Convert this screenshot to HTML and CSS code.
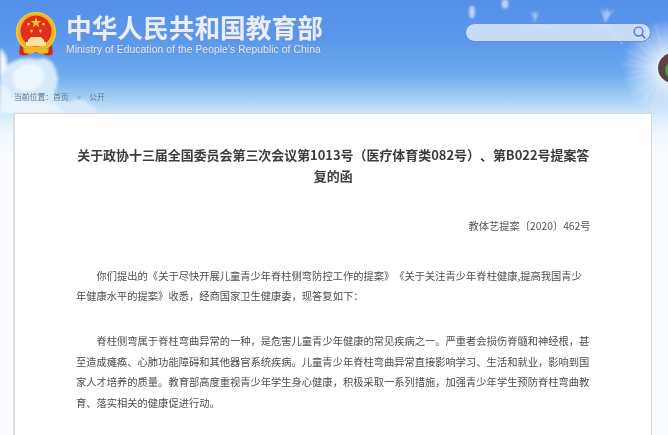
FILE: index.html
```html
<!DOCTYPE html>
<html lang="zh">
<head>
<meta charset="utf-8">
<title>关于政协十三届全国委员会第三次会议第1013号提案答复的函</title>
<link rel="stylesheet" href="styles.css">
</head>
<body>
<div class="page">
  <svg class="scenery" width="668" height="135" viewBox="0 0 668 135" aria-hidden="true">
    <defs>
      <filter id="soft"><feGaussianBlur stdDeviation="1.800"/></filter>
      <filter id="soft2"><feGaussianBlur stdDeviation=".8"/></filter>
      <radialGradient id="puff"><stop offset="0.3" stop-color="#fff" stop-opacity=".75"/><stop offset="1" stop-color="#fff" stop-opacity="0"/></radialGradient>
    </defs>
    <g filter="url(#soft)">
      <path d="M0 48l4 4 3 6 0 7 5-3 8-3 9-1 8 1 8-1 7 4 4 8 2 9-1 8-3 5 6 7 9 3 8-3 8 2 9 6 7 8H0z" fill="#d6e9fa"/>
      <path d="M0 52l5 8 1 10-6 5z" fill="#f6fafe"/>
      <path d="M12 74l10-9 14-1 7 6 1 9-5 8-12 5-12-4z" fill="#eef6fd"/>
      <path d="M0 84l8 6 6 10 12 2 22 0 10 4 8 7H0z" fill="#eaf4fc"/>
    </g>
    <g filter="url(#soft2)" fill="#fff" opacity=".6">
      <ellipse cx="472" cy="12" rx="3" ry="6.500"/>
      <ellipse cx="505" cy="4" rx="3.500" ry="4.500"/>
      <path d="M535 22l-4-11 3 3 1-4 1 4 3-3z" opacity=".75"/>
      <path d="M605 23l-4-15 4 5 2-6 2 6 5-4z" opacity=".75"/>
      <path d="M535 22l-9 7M605 23l-12 8" stroke="#fff" stroke-width="1" fill="none" opacity=".6"/>
    </g>
    <path d="M537 23l20 7M606 24l16 20" stroke="#efe7cf" stroke-width=".8" fill="none" opacity=".7"/>
    <circle cx="672" cy="68" r="50" fill="url(#puff)"/>
    <g stroke="#fff" stroke-width=".5" opacity=".65" filter="url(#soft2)">
      <path d="M668 70L625 50M668 70L622 64M668 70L626 80M668 70L632 95M668 70L640 32M668 70L655 24M668 70L650 110M668 70L630 72M668 70L636 42M668 70L628 60M668 70L642 102"/>
    </g>
    <circle cx="673" cy="68" r="15" fill="#5a4345"/>
    <circle cx="674" cy="70" r="9" fill="#5d9344"/>
  </svg>

  <header class="masthead">
    <svg class="emblem" width="42" height="46" viewBox="0 0 42 46" role="img" aria-label="国徽">
      <path d="M6 31c-2 4-2 9-1 12 5 1 8 0 11-2h10c3 2 6 3 11 2 1-3 1-8-1-12z" fill="#d42a1d"/>
      <circle cx="21" cy="20" r="20" fill="#eeb81f"/>
      <circle cx="21" cy="20" r="19.500" fill="none" stroke="#f4cf57" stroke-width="1"/>
      <circle cx="21" cy="19" r="15.500" fill="#e12c20"/>
      <polygon points="21,5 22.300,9 26.400,9 23.100,11.400 24.300,15.300 21,12.900 17.700,15.300 18.900,11.400 15.600,9 19.700,9" fill="#f5c52b"/>
      <circle cx="13.500" cy="12" r="1.500" fill="#f5c52b"/>
      <circle cx="28.500" cy="12" r="1.500" fill="#f5c52b"/>
      <circle cx="16.500" cy="19" r="1.400" fill="#f5c52b"/>
      <circle cx="25.500" cy="19" r="1.400" fill="#f5c52b"/>
      <path d="M13 28l3-3h10l3 3v1.500l2 .5v4H11v-4l2-.5z" fill="#f8e4a0"/>
      <path d="M8 36c4 3 9 3 13 1 4 2 9 2 13-1l-1 5c-3 1-9 1-12-1-3 2-9 2-12 1z" fill="#efbb28"/>
    </svg>
    <div class="brand">
      <h1 class="brand-cn">中华人民共和国教育部</h1>
      <p class="brand-en">Ministry of Education of the People's Republic of China</p>
    </div>
    <form class="search">
      <svg class="search-icon" width="13" height="13" viewBox="0 0 14 14" aria-hidden="true">
        <circle cx="6" cy="6" r="4.800" fill="none" stroke="#5272e4" stroke-width="1.500"/>
        <path d="M9.500 9.500l3.200 3.200" stroke="#5272e4" stroke-width="1.800" stroke-linecap="round"/>
      </svg>
    </form>
  </header>

  <nav class="crumbs">当前位置&#xFF1A;首页<span class="crumb-sep">&gt;</span>公开</nav>

  <main class="sheet">
    <h2 class="doc-title">关于政协十三届全国委员会第三次会议第1013号&#xFF08;医疗体育类082号&#xFF09;、第B022号提案答复的函</h2>
    <p class="doc-no">教体艺提案〔2020〕462号</p>
    <p class="para">你们提出的《关于尽快开展儿童青少年脊柱侧弯防控工作的提案》《关于关注青少年脊柱健康,提高我国青少年健康水平的提案》收悉&#xFF0C;经商国家卫生健康委&#xFF0C;现答复如下&#xFF1A;</p>
    <p class="para">脊柱侧弯属于脊柱弯曲异常的一种&#xFF0C;是危害儿童青少年健康的常见疾病之一。严重者会损伤脊髓和神经根&#xFF0C;甚至造成瘫痪、心肺功能障碍和其他器官系统疾病。儿童青少年脊柱弯曲异常直接影响学习、生活和就业&#xFF0C;影响到国家人才培养的质量。教育部高度重视青少年学生身心健康&#xFF0C;积极采取一系列措施&#xFF0C;加强青少年学生预防脊柱弯曲教育、落实相关的健康促进行动。</p>
  </main>
</div>
</body>
</html>
```
FILE: styles.css
```css
* { box-sizing: border-box; }
html, body { margin: 0; height: 100%; overflow: hidden; }
body { font-family: "Liberation Sans", "Noto Sans CJK SC", sans-serif; text-spacing-trim: space-all; }

.page {
  position: relative;
  width: 668px;
  height: 435px;
  overflow: hidden;
  background: linear-gradient(#5590ea 0, #5b98ec 40px, #6cabef 75px, #a9d2f6 100px, #dcedfb 118px, #f2f8fd 135px, #fbfcfe 160px);
}
.scenery { position: absolute; left: 0; top: 0; }

.masthead {
  position: relative;
  height: 88px;
  display: flex;
  align-items: flex-start;
  padding: 12px 17px 0 15px;
}
.emblem { flex: none; filter: blur(.4px); }
.brand { margin: 3px 0 0 9px; filter: blur(.35px); }
.brand-cn {
  margin: 0;
  font: bold 25.700px/24px "Noto Sans CJK SC", sans-serif;
  white-space: nowrap;
  color: #e8eef9;
  text-shadow: 0 1px 1px #7f93b8;
}
.brand-en {
  margin: 4px 0 0;
  font-size: 10.300px;
  line-height: 13px;
  letter-spacing: .08px;
  white-space: nowrap;
  color: #dfe8f6;
  text-shadow: 0 1px 1px #6d86b3;
}
.search {
  margin: 10.500px 0 0 auto;
  width: 186px;
  height: 19px;
  display: flex;
  align-items: center;
  justify-content: flex-end;
  padding-right: 4px;
  border: 1px solid #6d86e2;
  border-radius: 10px;
  background: rgba(224, 236, 252, .82);
}

.crumbs {
  position: relative;
  height: 25px;
  padding: 2px 0 0 14px;
  font: 7.800px/14px "Noto Sans CJK SC", sans-serif;
  color: #6b7480;
  filter: blur(.3px);
}
.crumb-sep { margin: 0 8px; font-family: "Liberation Sans", sans-serif; color: #7d8791; }

.sheet {
  position: relative;
  margin-left: 13px;
  width: 639px;
  height: 330px;
  padding: 31px 60.500px 0 61px;
  background: #fff;
  border: 1px solid #d4d6d8;
  border-left: 2px solid #dcdddf;
  border-bottom: 0;
  color: #555;
  filter: blur(.3px);
}
.doc-title {
  margin: 0;
  font: bold 12.950px/20.600px "Noto Sans CJK SC", sans-serif;
  text-align: center;
  color: #3c3c3c;
}
.doc-no {
  margin: 30px 0 0;
  font: 10.280px/20.600px "Noto Sans CJK SC", sans-serif;
  text-align: right;
}
.para {
  margin: 24px 0 0;
  font: 10.280px/20.600px "Noto Sans CJK SC", sans-serif;
  text-indent: 2em;
  color: #4d4d4d;
}
.doc-no + .para { margin-top: 29px; }
```
